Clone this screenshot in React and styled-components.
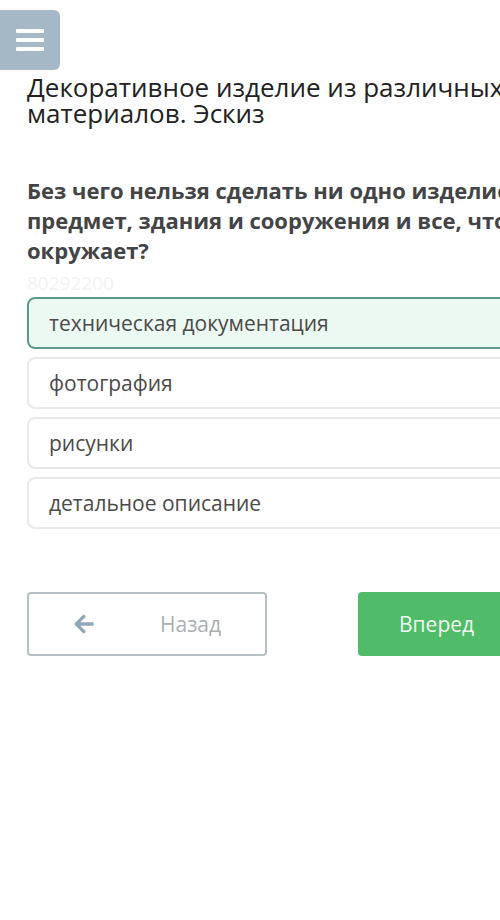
import React from "react";
import styled, { createGlobalStyle } from "styled-components";
import { FaArrowLeft } from "react-icons/fa";

const GlobalStyle = createGlobalStyle`
  html, body {
    margin: 0;
    padding: 0;
    background: #ffffff;
    overflow: hidden;
  }
  body {
    font-family: "Open Sans", "Noto Sans", sans-serif;
  }
`;

const options = [
  { text: "техническая документация", selected: true },
  { text: "фотография" },
  { text: "рисунки" },
  { text: "детальное описание" },
];

export default function App() {
  return (
    <>
      <GlobalStyle />
      <Page>
        <MenuButton aria-label="menu">
          <Bar />
          <Bar />
          <Bar />
        </MenuButton>
        <Content>
          <Title>
            Декоративное изделие из различных
            <br />
            материалов. Эскиз
          </Title>
          <Question>
            Без чего нельзя сделать ни одно изделие,
            <br />
            предмет, здания и сооружения и все, что нас
            <br />
            окружает?
          </Question>
          <Code>80292200</Code>
          <Options>
            {options.map((o) => (
              <Option key={o.text} $selected={o.selected}>
                {o.text}
              </Option>
            ))}
          </Options>
          <Nav>
            <BackButton>
              <FaArrowLeft size={22} />
              <span>Назад</span>
            </BackButton>
            <NextButton>Вперед</NextButton>
          </Nav>
        </Content>
      </Page>
    </>
  );
}

const Page = styled.div`
  width: 500px;
  height: 920px;
  overflow: hidden;
  padding-top: 10px;
  box-sizing: border-box;
`;

const MenuButton = styled.div`
  width: 60px;
  height: 60px;
  background: #a5b8c5;
  border-radius: 0 6px 6px 0;
  display: flex;
  flex-direction: column;
  justify-content: center;
  align-items: center;
  gap: 5px;
`;

const Bar = styled.div`
  width: 28px;
  height: 4px;
  border-radius: 1px;
  background: #ffffff;
`;

const Content = styled.div`
  width: 473px;
  padding-left: 27px;
  overflow: hidden;
`;

const Title = styled.h1`
  margin: 4px 0 0;
  font-size: 26px;
  font-weight: 400;
  line-height: 26px;
  color: #222222;
  white-space: nowrap;
`;

const Question = styled.h2`
  margin: 49px 0 0;
  font-size: 22px;
  font-weight: 700;
  line-height: 30px;
  color: #434446;
  white-space: nowrap;
`;

const Code = styled.div`
  font-size: 19px;
  line-height: 22px;
  color: #f1f3f3;
  margin-top: 7px;
`;

const Options = styled.div`
  margin-top: 3px;
  display: flex;
  flex-direction: column;
  gap: 8px;
  width: 490px;
`;

const Option = styled.div`
  height: 52px;
  box-sizing: border-box;
  display: flex;
  align-items: center;
  padding-left: 20px;
  border-radius: 8px;
  border: 2px solid ${(p) => (p.$selected ? "#5b9a8b" : "#e8e9e9")};
  background: ${(p) => (p.$selected ? "#ecf8f2" : "#ffffff")};
  font-size: 21px;
  color: #4a4a4a;
`;

const Nav = styled.div`
  margin-top: 63px;
  display: flex;
  gap: 91px;
`;

const BackButton = styled.div`
  flex: none;
  width: 240px;
  height: 64px;
  box-sizing: border-box;
  border: 2px solid #b6bfc3;
  border-radius: 4px;
  display: flex;
  align-items: center;
  padding-left: 44px;
  color: #8fa7b8;
  span {
    margin-left: 65px;
    font-size: 21px;
    color: #a9afb2;
  }
`;

const NextButton = styled.div`
  flex: none;
  width: 160px;
  height: 64px;
  border-radius: 4px;
  background: #50bb68;
  color: #eefaf0;
  font-size: 21px;
  display: flex;
  align-items: center;
  padding-left: 41px;
  box-sizing: border-box;
`;
